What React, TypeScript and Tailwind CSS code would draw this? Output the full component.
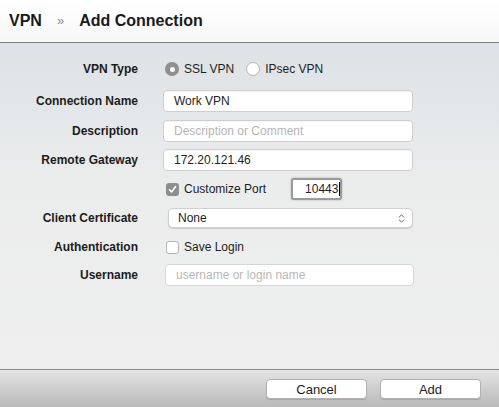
import { ChevronsUpDown } from 'lucide-react'

const font = { fontFamily: '"Liberation Sans", Arial, sans-serif' }

function Label({ children }: { children: React.ReactNode }) {
  return <div className="w-[138px] shrink-0 text-right text-[12px] font-bold text-[#1c1c1c]">{children}</div>
}

function TextField({ value, placeholder }: { value?: string; placeholder?: string }) {
  return (
    <div className="ml-[25px] flex h-[22px] w-[250px] items-center rounded-[4px] border border-[#cfcfcf] bg-white px-[10px] text-[12px] shadow-[inset_0_1px_0_rgba(0,0,0,0.04)]">
      {value ? <span className="text-[#1e1e1e]">{value}</span> : <span className="text-[#b5b5b5]">{placeholder}</span>}
    </div>
  )
}

function Check({ checked }: { checked?: boolean }) {
  return checked ? (
    <div className="flex h-[13px] w-[13px] items-center justify-center rounded-[3px] bg-[#8e8e8e]">
      <svg width="9" height="9" viewBox="0 0 9 9">
        <path d="M1.5 4.8 L3.6 7 L7.6 1.6" fill="none" stroke="white" strokeWidth="1.6" strokeLinecap="round" strokeLinejoin="round" />
      </svg>
    </div>
  ) : (
    <div className="h-[13px] w-[13px] rounded-[3px] border border-[#b4b4b4] bg-white" />
  )
}

export default function App() {
  return (
    <div className="flex h-[407px] w-[499px] flex-col overflow-hidden" style={font}>
      <div className="flex h-[43px] shrink-0 items-center border-b border-[#7d8283] bg-gradient-to-b from-white to-[#f7f7f7] pl-[9px]">
        <span className="text-[16px] font-bold text-[#1a1a1a]">VPN</span>
        <span className="ml-[15px] text-[13px] text-[#8a8a8a]">»</span>
        <span className="ml-[15px] text-[16px] font-bold text-[#1a1a1a]">Add Connection</span>
      </div>

      <div className="flex flex-1 flex-col bg-[linear-gradient(to_bottom,#dde2e6_0px,#ebecec_140px,#efefef_320px)] pt-[15px]">
        <div className="flex h-[22px] items-center">
          <Label>VPN Type</Label>
          <div className="ml-[27px] flex items-center text-[12px] text-[#1e1e1e]">
            <div className="flex h-[14px] w-[14px] items-center justify-center rounded-full bg-[#8f8f8f]">
              <div className="h-[5px] w-[5px] rounded-full bg-white" />
            </div>
            <span className="ml-[5px]">SSL VPN</span>
            <div className="ml-[12px] h-[14px] w-[14px] rounded-full border border-[#b4b4b4] bg-white" />
            <span className="ml-[5px]">IPsec VPN</span>
          </div>
        </div>

        <div className="mt-[10px] flex h-[22px] items-center">
          <Label>Connection Name</Label>
          <TextField value="Work VPN" />
        </div>

        <div className="mt-[8px] flex h-[22px] items-center">
          <Label>Description</Label>
          <TextField placeholder="Description or Comment" />
        </div>

        <div className="mt-[7px] flex h-[22px] items-center">
          <Label>Remote Gateway</Label>
          <TextField value="172.20.121.46" />
        </div>

        <div className="mt-[7px] flex h-[22px] items-center">
          <div className="w-[138px] shrink-0" />
          <div className="ml-[28px] flex items-center text-[12px] text-[#1e1e1e]">
            <Check checked />
            <span className="ml-[5px]">Customize Port</span>
          </div>
          <div className="ml-[25px] flex h-[22px] w-[51px] items-center rounded-[3px] border-2 border-[#9a9a9a] bg-white pl-[12px] text-[12px] text-[#1e1e1e] shadow-[0_0_2px_rgba(0,0,0,0.3)]">
            10443<span className="ml-[1px] inline-block h-[14px] w-px bg-black" />
          </div>
        </div>

        <div className="mt-[7px] flex h-[22px] items-center">
          <Label>Client Certificate</Label>
          <div className="ml-[30px] flex h-[20px] w-[245px] items-center justify-between rounded-[5px] border border-[#d0d0d0] bg-white pl-[9px] pr-[5px] text-[12px] text-[#1e1e1e] shadow-[0_1px_1px_rgba(0,0,0,0.15)]">
            <span>None</span>
            <ChevronsUpDown size={11} strokeWidth={2} className="text-[#555]" />
          </div>
        </div>

        <div className="mt-[7px] flex h-[22px] items-center">
          <Label>Authentication</Label>
          <div className="ml-[28px] flex items-center text-[12px] text-[#1e1e1e]">
            <Check />
            <span className="ml-[5px]">Save Login</span>
          </div>
        </div>

        <div className="mt-[6px] flex h-[22px] items-center">
          <Label>Username</Label>
          <div className="ml-[27px] flex h-[22px] w-[249px] items-center rounded-[4px] border border-[#d6d6d6] bg-white px-[10px] text-[12px] text-[#b8b8b8]">
            username or login name
          </div>
        </div>
      </div>

      <div className="flex h-[38px] shrink-0 items-center justify-end gap-[13px] border-t border-[#8a8a8a] bg-gradient-to-b from-[#e4e4e4] to-[#b9b9b9] pr-[18px]">
        <button className="h-[20px] w-[101px] rounded-[4px] border border-[#b2b2b2] bg-white text-[13px] text-[#1c1c1c] shadow-[0_1px_1px_rgba(0,0,0,0.15)]">Cancel</button>
        <button className="h-[20px] w-[101px] rounded-[4px] border border-[#b2b2b2] bg-white text-[13px] text-[#1c1c1c] shadow-[0_1px_1px_rgba(0,0,0,0.15)]">Add</button>
      </div>
    </div>
  )
}
